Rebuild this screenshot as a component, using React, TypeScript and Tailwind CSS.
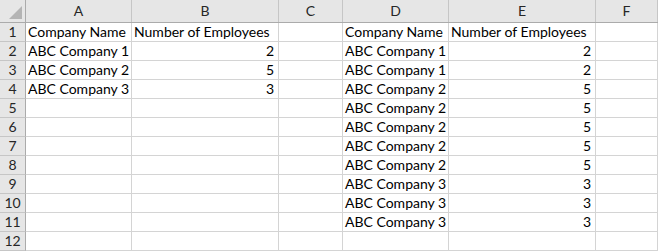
import React from 'react';

const cols = [
  { key: 'A', w: 'w-[106px]' },
  { key: 'B', w: 'w-[147px]' },
  { key: 'C', w: 'w-[64px]' },
  { key: 'D', w: 'w-[106px]' },
  { key: 'E', w: 'w-[147px]' },
  { key: 'F', w: 'flex-1' },
];

type Cell = string | number | null;

const data: Cell[][] = [
  ['Company Name', 'Number of Employees', null, 'Company Name', 'Number of Employees', null],
  ['ABC Company 1', 2, null, 'ABC Company 1', 2, null],
  ['ABC Company 2', 5, null, 'ABC Company 1', 2, null],
  ['ABC Company 3', 3, null, 'ABC Company 2', 5, null],
  [null, null, null, 'ABC Company 2', 5, null],
  [null, null, null, 'ABC Company 2', 5, null],
  [null, null, null, 'ABC Company 2', 5, null],
  [null, null, null, 'ABC Company 2', 5, null],
  [null, null, null, 'ABC Company 3', 3, null],
  [null, null, null, 'ABC Company 3', 3, null],
  [null, null, null, 'ABC Company 3', 3, null],
  [null, null, null, null, null, null],
];

export default function App() {
  return (
    <div
      className="w-[658px] h-[252px] overflow-hidden bg-white text-[14px] leading-none text-black"
      style={{ fontFamily: 'Lato, "Liberation Sans", sans-serif' }}
    >
      {/* column headers */}
      <div className="flex h-[23px] bg-[#e6e6e6] border-b border-[#ababab]">
        <div className="relative w-[26px] border-r border-[#ababab]">
          <svg className="absolute right-[3px] bottom-[3px]" width="13" height="13">
            <polygon points="13,0 13,13 0,13" fill="#b4b4b4" />
          </svg>
        </div>
        {cols.map((c) => (
          <div
            key={c.key}
            className={`${c.w} flex items-end justify-center pb-[4px] text-[#262626] border-r border-[#c6c6c6]`}
          >
            {c.key}
          </div>
        ))}
      </div>

      {data.map((row, i) => (
        <div key={i} className="flex h-[19px]">
          <div className="w-[26px] flex items-end justify-center pb-[2px] bg-[#e6e6e6] text-[#262626] border-r border-b border-r-[#ababab] border-b-[#c6c6c6]">
            {i + 1}
          </div>
          {cols.map((c, j) => {
            const v = row[j];
            const isNum = typeof v === 'number';
            return (
              <div
                key={c.key}
                className={`${c.w} flex items-end pb-[2px] whitespace-nowrap border-r border-b border-[#d4d4d4] ${
                  isNum ? 'justify-end pr-[4px]' : 'px-[2px]'
                }`}
              >
                {v}
              </div>
            );
          })}
        </div>
      ))}
    </div>
  );
}
